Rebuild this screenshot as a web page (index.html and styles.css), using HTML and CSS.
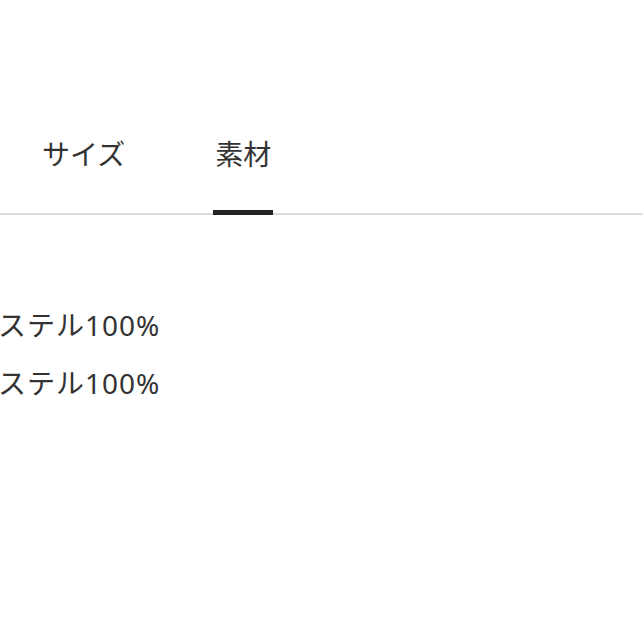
FILE: index.html
```html
<!DOCTYPE html>
<html lang="ja">
<head>
<meta charset="utf-8">
<link rel="stylesheet" href="styles.css">
</head>
<body>
    <div class="tabs">
        <div class="tab">サイズ</div>
        <div class="tab active">素材</div>
    </div>
    <div class="material">
        <p class="row">ポリエステル100%</p>
        <p class="row">ポリエステル100%</p>
    </div>
</body>
</html>
```

FILE: styles.css
```css
body
{
    margin: 0;
    background: #fff;
    color: #333;
    font-family: "Noto Sans", "Noto Sans CJK JP", sans-serif;
    overflow: hidden;
}
.tabs
{
    display: flex;
    gap: 86px;
    margin-top: 140px;
    padding-left: 40px;
    border-bottom: 2px solid #dcdcdc;
}
.tab
{
    font-size: 28px;
    line-height: 28px;
    padding: 0 2px 42px;
    border-bottom: 5px solid transparent;
    margin-bottom: -2px;
}
.tab.active
{
    border-bottom-color: #222;
}
.material
{
    margin-top: 96px;
    margin-left: -89px;
}
.row
{
    margin: 0 0 30px;
    font-size: 28px;
    line-height: 28px;
    letter-spacing: 1px;
    white-space: nowrap;
}
```
